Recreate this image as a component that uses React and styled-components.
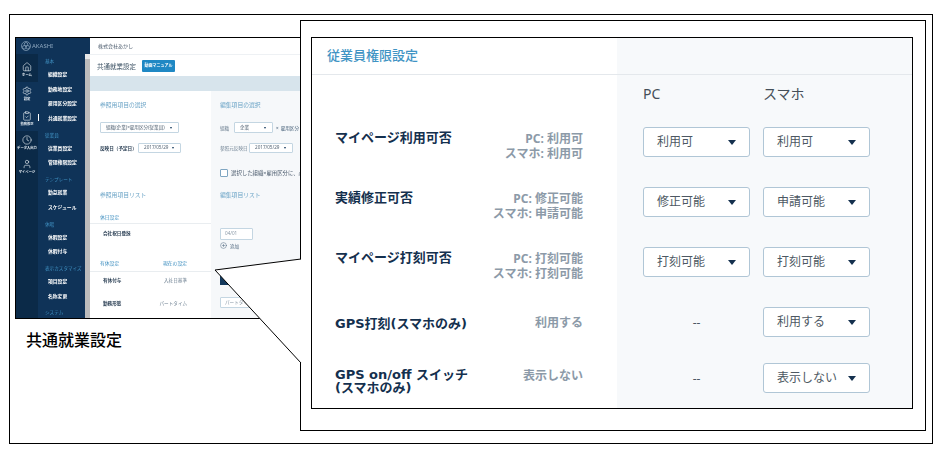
import React from "react";
import styled, { createGlobalStyle } from "styled-components";
import { Home, Settings, ClipboardCheck, Clock, User, CirclePlus } from "lucide-react";

const GlobalStyle = createGlobalStyle`
  html, body {
    margin: 0;
    background: #fff;
  }
  * {
    box-sizing: border-box;
  }
  body {
    font-family: "Noto Sans", "Noto Sans CJK JP", sans-serif;
  }
`;

const railItems = [
  { icon: Home, label: "ホーム", first: true, dark: true },
  { icon: Settings, label: "設定" },
  { icon: ClipboardCheck, label: "勤務修正" },
  { icon: Clock, label: "データ入出力", dark: true },
  { icon: User, label: "マイページ", dark: true },
];

const menu = [
  { head: "基本", first: true },
  { item: "組織設定" },
  { item: "勤務地設定" },
  { item: "雇用区分設定" },
  { item: "共通就業設定", active: true },
  { head: "従業員" },
  { item: "従業員設定" },
  { item: "管理権限設定" },
  { head: "テンプレート" },
  { item: "勤怠就業" },
  { item: "スケジュール" },
  { head: "休暇" },
  { item: "休暇設定" },
  { item: "休暇付与" },
  { head: "表示カスタマイズ" },
  { item: "項目設定" },
  { item: "名称変更" },
  { head: "システム" },
];

const permissions = [
  { label: ["マイページ利用可否"], note: ["PC: 利用可", "スマホ: 利用可"], pc: "利用可", sp: "利用可", height: 60 },
  { label: ["実績修正可否"], note: ["PC: 修正可能", "スマホ: 申請可能"], pc: "修正可能", sp: "申請可能", height: 60 },
  { label: ["マイページ打刻可否"], note: ["PC: 打刻可能", "スマホ: 打刻可能"], pc: "打刻可能", sp: "打刻可能", height: 60 },
  { label: ["GPS打刻(スマホのみ)"], note: ["利用する"], sp: "利用する", height: 56, labelTop: 10, noteTop: 8 },
  { label: ["GPS on/off スイッチ", "(スマホのみ)"], note: ["表示しない"], sp: "表示しない", height: 45, labelTop: 5, noteTop: 5 },
];

const App = () => (
  <>
    <GlobalStyle />
    <Page>
      <Frame>
        <LeftColumn>
          <Thumb>
            <ThumbInner>
              <Sidebar>
                <LogoBar>
                  <svg width="10" height="10" viewBox="0 0 20 20" fill="none" stroke="#8fa9c0" strokeWidth="1.4">
                    <circle cx="10" cy="10" r="9" />
                    <circle cx="10" cy="6.5" r="3.5" />
                    <circle cx="6.5" cy="12.5" r="3.5" />
                    <circle cx="13.5" cy="12.5" r="3.5" />
                  </svg>
                  AKASHI
                </LogoBar>
                <SideBody>
                  <Rail>
                    {railItems.map(({ icon: Icon, label, first, dark }) => (
                      <RailItem key={label} $first={first} $dark={dark}>
                        <Icon size={10} color="#e4ebf1" strokeWidth={1.5} />
                        <span>{label}</span>
                      </RailItem>
                    ))}
                    <RailRest />
                  </Rail>
                  <Menu>
                    {menu.map((m) =>
                      m.head ? (
                        <MenuHead key={m.head} $first={m.first}>
                          {m.head}
                        </MenuHead>
                      ) : (
                        <MenuItem key={m.item} $active={m.active}>
                          {m.item}
                        </MenuItem>
                      )
                    )}
                  </Menu>
                  <ScrollBar />
                </SideBody>
              </Sidebar>
              <Main>
                <TopBar>株式会社あかし</TopBar>
                <TitleRow>
                  <PageTitle>共通就業設定</PageTitle>
                  <ManualButton>動画マニュアル</ManualButton>
                </TitleRow>
                <Band />
                <Columns>
                  <RefColumn>
                    <SectionTitle>参照用項目の選択</SectionTitle>
                    <MiniSelect $w={79} $h={11} $mt={10} $ml={10}>
                      組織(企業)×雇用区分(従業員)
                      <MiniCaret />
                    </MiniSelect>
                    <MiniRow $mt={10} $ml={10}>
                      <MiniLabel $w={38}>反映日（予定日）</MiniLabel>
                      <MiniSelect $w={43} $h={10}>
                        2017/05/29
                        <MiniCaret />
                      </MiniSelect>
                    </MiniRow>
                    <SectionTitle $mt={35}>参照用項目リスト</SectionTitle>
                    <ListHead $mt={10} $h={12}>
                      <span>休日設定</span>
                    </ListHead>
                    <ListRow $h={18}>
                      <MiniLabel>会社祝日登録</MiniLabel>
                    </ListRow>
                    <ListHead $mt={14} $h={16}>
                      <span>有休設定</span>
                      <span>現在の設定</span>
                    </ListHead>
                    <ListRow $h={16}>
                      <MiniLabel>有休付与</MiniLabel>
                      <MiniValue>入社日基準</MiniValue>
                    </ListRow>
                    <ListRow $h={16} $mt={7}>
                      <MiniLabel>勤務形態</MiniLabel>
                      <MiniValue>パートタイム</MiniValue>
                    </ListRow>
                  </RefColumn>
                  <EditColumn>
                    <SectionTitle $flush>編集項目の選択</SectionTitle>
                    <MiniRow $mt={10}>
                      <MiniValue $w={14}>組織</MiniValue>
                      <MiniSelect $w={39} $h={11}>
                        企業
                        <MiniCaret />
                      </MiniSelect>
                      <MiniText $ml={3}>×</MiniText>
                      <MiniText $ml={2}>雇用区分</MiniText>
                    </MiniRow>
                    <MiniRow $mt={10}>
                      <MiniValue $w={29}>参照元反映日</MiniValue>
                      <MiniSelect $w={44} $h={10}>
                        2017/05/29
                        <MiniCaret />
                      </MiniSelect>
                    </MiniRow>
                    <MiniRow $mt={16}>
                      <MiniCheck />
                      <CheckText>選択した組織×雇用区分に、必</CheckText>
                    </MiniRow>
                    <SectionTitle $flush $mt={11}>編集項目リスト</SectionTitle>
                    <MiniInput $w={33} $h={12} $mt={26}>04/01</MiniInput>
                    <MiniRow $mt={2}>
                      <CirclePlus size={7} color="#48627a" strokeWidth={1.6} />
                      <MiniText $ml={3}>追加</MiniText>
                    </MiniRow>
                    <DarkButton />
                    <MiniInput $w={60} $h={11} $mt={12}>パートタイム</MiniInput>
                  </EditColumn>
                </Columns>
              </Main>
            </ThumbInner>
          </Thumb>
          <Caption>共通就業設定</Caption>
        </LeftColumn>

        <Callout>
          <Pointer width="90" height="106" viewBox="0 0 90 106">
            <polygon points="88,0 1,11 88,105" fill="#fff" />
            <polyline points="87,0 1,11 87,104" fill="none" stroke="#000" strokeWidth="1" />
          </Pointer>
          <Panel>
            <PanelHeader>従業員権限設定</PanelHeader>
            <ColumnHeads>
              <span />
              <span />
              <ColumnHead>PC</ColumnHead>
              <ColumnHead>スマホ</ColumnHead>
            </ColumnHeads>
            {permissions.map((p) => (
              <PermRow key={p.label[0]} $h={p.height}>
                <PermLabel $top={p.labelTop}>
                  {p.label.map((line) => (
                    <div key={line}>{line}</div>
                  ))}
                </PermLabel>
                <PermNote $top={p.noteTop}>
                  {p.note.map((line) => (
                    <div key={line}>{line}</div>
                  ))}
                </PermNote>
                {p.pc ? <Dropdown value={p.pc} /> : <Dash>--</Dash>}
                <Dropdown value={p.sp} />
              </PermRow>
            ))}
          </Panel>
        </Callout>
      </Frame>
    </Page>
  </>
);

const Dropdown = ({ value }) => (
  <SelectBox>
    {value}
    <Caret />
  </SelectBox>
);

const Page = styled.div`
  width: 939px;
  height: 453px;
  padding: 14px 0 0 9px;
  overflow: hidden;
`;

const Frame = styled.div`
  width: 924px;
  height: 430px;
  border: 1px solid #000;
  display: flex;
  align-items: flex-start;
`;

const LeftColumn = styled.div`
  flex: none;
  width: 290px;
  padding: 22px 0 0 5px;
`;

const Thumb = styled.div`
  width: 285px;
  height: 282px;
  border: solid #000;
  border-width: 1px 0 1px 1px;
  overflow: hidden;
`;

const ThumbInner = styled.div`
  display: flex;
  width: 100%;
  height: 100%;
  filter: blur(0.5px);
`;

const Sidebar = styled.div`
  flex: none;
  width: 74px;
  display: flex;
  flex-direction: column;
  background: #0f3358;
`;

const LogoBar = styled.div`
  height: 16px;
  padding-left: 5px;
  display: flex;
  align-items: center;
  gap: 1px;
  font-size: 6px;
  color: #8fa9c0;
`;

const SideBody = styled.div`
  flex: 1;
  display: flex;
  min-height: 0;
`;

const Rail = styled.div`
  flex: none;
  width: 22px;
  display: flex;
  flex-direction: column;
`;

const RailItem = styled.div`
  flex: none;
  height: ${(p) => (p.$first ? "28px" : "24.3px")};
  padding-bottom: 5px;
  display: flex;
  flex-direction: column;
  justify-content: flex-end;
  align-items: center;
  background: ${(p) => (p.$dark ? "#0b2a48" : "transparent")};

  span {
    font-size: 3.3px;
    line-height: 5px;
    font-weight: 700;
    color: #e4ebf1;
    white-space: nowrap;
  }
`;

const RailRest = styled.div`
  flex: 1;
  background: #0b2a48;
`;

const Menu = styled.div`
  flex: 1;
  display: flex;
  flex-direction: column;
  min-width: 0;
`;

const MenuHead = styled.div`
  flex: none;
  height: 12px;
  margin-top: ${(p) => (p.$first ? "1px" : "3px")};
  padding-left: 7px;
  font-size: 4.6px;
  line-height: 12px;
  color: #3f8fc0;
  white-space: nowrap;
`;

const MenuItem = styled.div`
  flex: none;
  position: relative;
  height: 14.7px;
  padding-left: 10px;
  font-size: 4.8px;
  font-weight: 700;
  line-height: 14.7px;
  color: #fff;
  white-space: nowrap;

  ${(p) =>
    p.$active &&
    `
    &::before {
      content: "";
      position: absolute;
      left: 0;
      top: 3px;
      width: 1px;
      height: 7px;
      background: #fff;
    }
  `}
`;

const ScrollBar = styled.div`
  flex: none;
  width: 5px;
  background: linear-gradient(#e8e8e8 5px, #bcbcbc 5px, #bcbcbc 268px, #f0f0f0 268px);
`;

const Main = styled.div`
  flex: none;
  width: 210px;
  display: flex;
  flex-direction: column;
  background: #fff;
`;

const TopBar = styled.div`
  height: 17px;
  padding-left: 8px;
  font-size: 5px;
  line-height: 16px;
  color: #48586a;
  border-bottom: 1px solid #eef1f4;
`;

const TitleRow = styled.div`
  height: 21px;
  padding-left: 7px;
  display: flex;
  align-items: center;
  gap: 6px;
`;

const PageTitle = styled.div`
  font-size: 6.5px;
  color: #415668;
`;

const ManualButton = styled.div`
  width: 33px;
  height: 12px;
  border-radius: 1px;
  background: #1f88c4;
  font-size: 4px;
  font-weight: 700;
  line-height: 12px;
  text-align: center;
  color: #fff;
`;

const Band = styled.div`
  height: 15px;
  background: #d7e4ec;
`;

const Columns = styled.div`
  flex: 1;
  display: flex;
  min-height: 0;
`;

const RefColumn = styled.div`
  flex: none;
  width: 121px;
  display: flex;
  flex-direction: column;
  background: #fff;
`;

const EditColumn = styled.div`
  flex: none;
  width: 89px;
  padding-left: 9px;
  display: flex;
  flex-direction: column;
  background: #f6f8fa;
  overflow: hidden;
`;

const SectionTitle = styled.div`
  flex: none;
  height: 14px;
  margin: ${(p) => p.$mt ?? 7}px 0 0 ${(p) => (p.$flush ? 0 : 10)}px;
  font-size: 5.8px;
  line-height: 14px;
  color: #6aa3c6;
  white-space: nowrap;
`;

const MiniRow = styled.div`
  flex: none;
  display: flex;
  align-items: center;
  margin: ${(p) => p.$mt ?? 0}px 0 0 ${(p) => p.$ml ?? 0}px;
  white-space: nowrap;
`;

const MiniLabel = styled.div`
  flex: none;
  width: ${(p) => (p.$w ? `${p.$w}px` : "auto")};
  font-size: 4.6px;
  font-weight: 700;
  color: #2e4257;
  white-space: nowrap;
`;

const MiniValue = styled.div`
  flex: none;
  width: ${(p) => (p.$w ? `${p.$w}px` : "auto")};
  font-size: 4.6px;
  color: #6e8092;
  white-space: nowrap;
`;

const MiniText = styled.div`
  flex: none;
  margin-left: ${(p) => p.$ml ?? 0}px;
  font-size: 4.6px;
  color: #48627a;
`;

const MiniSelect = styled.div`
  flex: none;
  position: relative;
  width: ${(p) => p.$w}px;
  height: ${(p) => p.$h}px;
  margin: ${(p) => p.$mt ?? 0}px 0 0 ${(p) => p.$ml ?? 0}px;
  padding-left: 5px;
  border: 1px solid #c4d6e2;
  border-radius: 1px;
  background: #fff;
  font-size: 4.6px;
  line-height: ${(p) => p.$h - 3}px;
  color: #566676;
  white-space: nowrap;
`;

const MiniCaret = styled.span`
  position: absolute;
  top: 50%;
  right: 6px;
  margin-top: -1px;
  border-style: solid;
  border-width: 2px 1.5px 0;
  border-color: #163a5c transparent transparent;
`;

const MiniCheck = styled.div`
  flex: none;
  width: 8px;
  height: 8px;
  border: 1px solid #7fa6c2;
  border-radius: 1px;
  background: #fff;
`;

const CheckText = styled.div`
  flex: none;
  margin-left: 3px;
  font-size: 5.4px;
  color: #48586a;
`;

const MiniInput = styled.div`
  flex: none;
  width: ${(p) => p.$w}px;
  height: ${(p) => p.$h}px;
  margin-top: ${(p) => p.$mt}px;
  padding-left: 4px;
  border: 1px solid #c4d6e2;
  border-radius: 1px;
  background: #fff;
  font-size: 4.6px;
  line-height: ${(p) => p.$h - 3}px;
  color: #8998a6;
  white-space: nowrap;
`;

const DarkButton = styled.div`
  flex: none;
  width: 40px;
  height: 10px;
  margin-top: 26px;
  background: #14395c;
`;

const ListHead = styled.div`
  flex: none;
  height: ${(p) => p.$h}px;
  margin-top: ${(p) => p.$mt}px;
  padding: 0 24px 0 10px;
  display: flex;
  justify-content: space-between;
  border-bottom: 1px solid #e9edf0;
  font-size: 4.8px;
  line-height: 7px;
  color: #3f8fc0;
  align-items: center;
`;

const ListRow = styled.div`
  flex: none;
  height: ${(p) => p.$h}px;
  margin-top: ${(p) => p.$mt ?? 0}px;
  padding: 0 24px 0 13px;
  display: flex;
  align-items: center;
  justify-content: space-between;
`;

const Caption = styled.div`
  margin: 12px 0 0 11px;
  font-size: 16px;
  font-weight: 500;
  line-height: 18px;
  color: #000;
`;

const Callout = styled.div`
  flex: none;
  position: relative;
  width: 626px;
  height: 411px;
  margin-top: 5px;
  padding: 16px 0 0 10px;
  border: 1px solid #000;
  background: #fff;
`;

const Pointer = styled.svg`
  position: absolute;
  left: -87px;
  top: 238px;
  display: block;
  overflow: visible;
`;

const Panel = styled.div`
  width: 602px;
  height: 372px;
  border: 1px solid #000;
  background: linear-gradient(90deg, #fff 305px, #f7f9fb 305px);
`;

const PanelHeader = styled.div`
  height: 37px;
  padding-left: 15px;
  border-bottom: 1px solid #e4e8ec;
  font-size: 13px;
  font-weight: 500;
  line-height: 34px;
  color: #3f94c4;
`;

const rowColumns = "140px 168px 120px 107px";

const ColumnHeads = styled.div`
  height: 52px;
  padding: 9px 0 0 23px;
  display: grid;
  grid-template-columns: ${rowColumns};
`;

const ColumnHead = styled.div`
  font-size: 14px;
  line-height: 20px;
  color: #454f59;
`;

const PermRow = styled.div`
  height: ${(p) => p.$h}px;
  padding-left: 23px;
  display: grid;
  grid-template-columns: ${rowColumns};
  align-items: start;
`;

const PermLabel = styled.div`
  margin-top: ${(p) => p.$top ?? 4}px;
  font-family: "DejaVu Sans", "Noto Sans CJK JP", sans-serif;
  font-size: 13px;
  font-weight: 700;
  line-height: 13px;
  color: #14304e;
  white-space: nowrap;
`;

const PermNote = styled.div`
  margin-top: ${(p) => p.$top ?? 4}px;
  padding-right: 60px;
  font-size: 12px;
  font-weight: 700;
  line-height: 15px;
  text-align: right;
  color: #8c9aa8;
  white-space: nowrap;
`;

const SelectBox = styled.div`
  position: relative;
  width: 107px;
  height: 30px;
  padding-left: 13px;
  border: 1px solid #b0c6d6;
  border-radius: 3px;
  background: #fff;
  font-size: 12px;
  line-height: 28px;
  color: #4d5863;
  white-space: nowrap;
`;

const Caret = styled.span`
  position: absolute;
  top: 12px;
  right: 13px;
  border-style: solid;
  border-width: 5px 4.5px 0;
  border-color: #14304e transparent transparent;
`;

const Dash = styled.div`
  width: 107px;
  font-size: 12px;
  line-height: 32px;
  text-align: center;
  color: #4d5863;
`;

export default App;
